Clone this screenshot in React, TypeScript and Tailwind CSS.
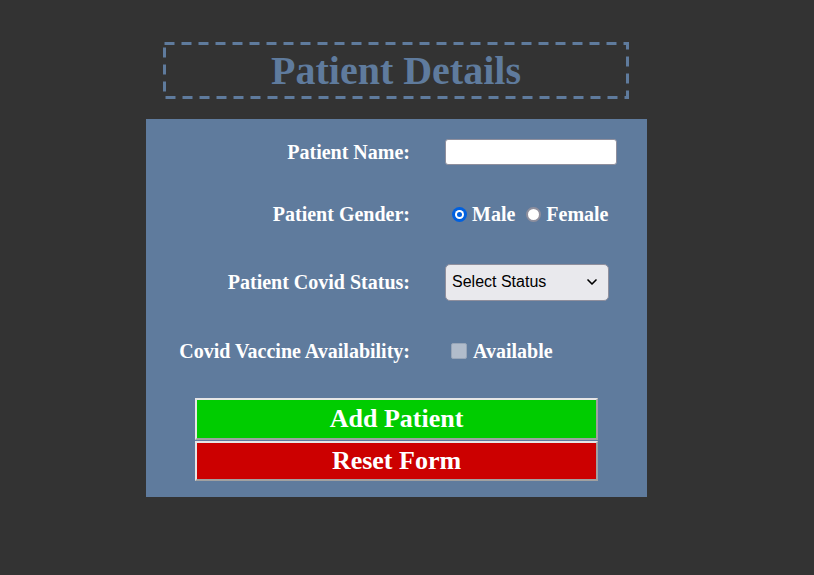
import { ChevronDown } from "lucide-react";

const serif = "font-['Liberation_Serif',serif] font-bold";

const FormRow = ({
  label,
  height,
  children,
}: {
  label: string;
  height: string;
  children: React.ReactNode;
}) => (
  <div className={`flex items-center ${height}`}>
    <div className={`w-[264px] text-right text-[20px] text-white ${serif}`}>
      {label}
    </div>
    <div className="ml-[35px] flex items-center">{children}</div>
  </div>
);

const Radio = ({ checked }: { checked?: boolean }) =>
  checked ? (
    <span className="flex h-[15px] w-[15px] shrink-0 items-center justify-center rounded-full bg-[#0060df]">
      <span className="flex h-[9px] w-[9px] items-center justify-center rounded-full bg-white">
        <span className="block h-[5px] w-[5px] rounded-full bg-[#0060df]" />
      </span>
    </span>
  ) : (
    <span className="block h-[15px] w-[15px] shrink-0 rounded-full border-2 border-[#8f8f9d] bg-white" />
  );

export default function App() {
  return (
    <div className="min-h-[575px] bg-[#333333] pt-[42px]">
      <div className="relative ml-[163px] flex h-[57px] w-[466px] items-center justify-center">
        <svg
          className="absolute inset-0"
          width="466"
          height="57"
          viewBox="0 0 466 57"
        >
          <rect
            x="1.5"
            y="1.5"
            width="463"
            height="54"
            fill="none"
            stroke="#5f7b9d"
            strokeWidth="3"
            strokeDasharray="10 7"
          />
        </svg>
        <h1 className={`text-[40px] leading-none text-[#5f7b9d] ${serif}`}>
          Patient Details
        </h1>
      </div>

      <div className="ml-[146px] mt-[20px] w-[501px] bg-[#5f7b9d] pt-[14px] pb-[16px]">
        <FormRow label="Patient Name:" height="h-[38px]">
          <input
            type="text"
            className="h-[26px] w-[172px] rounded-[3px] border border-[#8f8f9d] bg-white px-1 outline-none"
          />
        </FormRow>

        <FormRow label="Patient Gender:" height="h-[86px]">
          <div className={`flex items-center text-[20px] text-white ${serif}`}>
            <span className="ml-[7px]">
              <Radio checked />
            </span>
            <span className="ml-[5px]">Male</span>
            <span className="ml-[11px]">
              <Radio />
            </span>
            <span className="ml-[5px]">Female</span>
          </div>
        </FormRow>

        <FormRow label="Patient Covid Status:" height="h-[50px]">
          <div className="flex h-[37px] w-[164px] items-center justify-between rounded-[5px] border border-[#8f8f9d] bg-[#e9e9ed] pl-[6px] pr-[8px] font-['Liberation_Sans',sans-serif] text-[16px] text-black">
            <span>Select Status</span>
            <ChevronDown className="h-4 w-4" strokeWidth={2.5} />
          </div>
        </FormRow>

        <FormRow label="Covid Vaccine Availability:" height="h-[88px]">
          <div className={`flex items-center text-[20px] text-white ${serif}`}>
            <span className="ml-[6px] block h-[16px] w-[16px] rounded-[2px] border border-[#97a5b8] bg-[#b1bccb]" />
            <span className="ml-[6px]">Available</span>
          </div>
        </FormRow>

        <div className="ml-[49px] mt-[3px] flex w-[403px] flex-col gap-[1px]">
          <button
            className={`h-[42px] border-2 border-t-[#e6e6e6] border-l-[#e6e6e6] border-b-[#a0a0a0] border-r-[#a0a0a0] bg-[#00cc00] text-[26px] leading-none text-white ${serif}`}
          >
            Add Patient
          </button>
          <button
            className={`h-[40px] border-2 border-t-[#e6e6e6] border-l-[#e6e6e6] border-b-[#a0a0a0] border-r-[#a0a0a0] bg-[#cc0000] text-[26px] leading-none text-white ${serif}`}
          >
            Reset Form
          </button>
        </div>
      </div>
    </div>
  );
}
